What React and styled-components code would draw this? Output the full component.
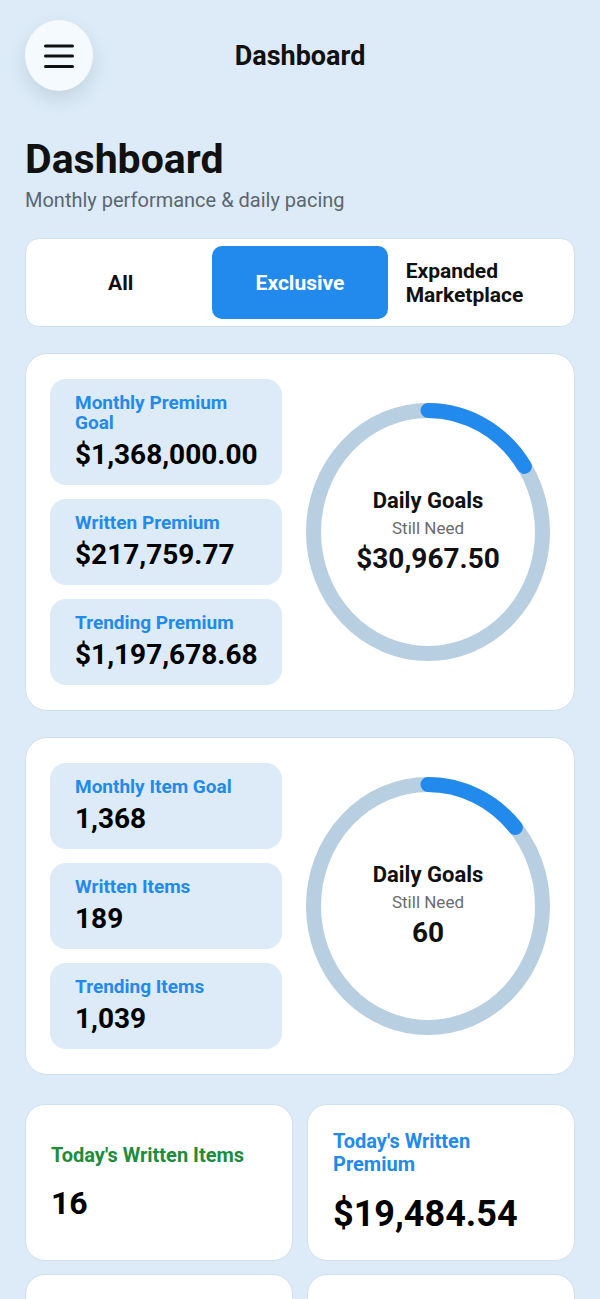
import React from "react";
import styled, { createGlobalStyle } from "styled-components";

const premiumStats = [
  { label: "Monthly Premium Goal", value: "$1,368,000.00" },
  { label: "Written Premium", value: "$217,759.77" },
  { label: "Trending Premium", value: "$1,197,678.68" },
];

const itemStats = [
  { label: "Monthly Item Goal", value: "1,368" },
  { label: "Written Items", value: "189" },
  { label: "Trending Items", value: "1,039" },
];

const tabs = ["All", "Exclusive", "Expanded Marketplace"];

function Ring({ percent, value }) {
  const w = 244;
  const h = 258;
  const rx = (w - 15) / 2;
  const ry = (h - 15) / 2;
  const cx = w / 2;
  const cy = h / 2;
  const a = 2 * Math.PI * percent;
  const ex = cx + rx * Math.sin(a);
  const ey = cy - ry * Math.cos(a);
  const large = percent > 0.5 ? 1 : 0;

  return (
    <RingWrap>
      <svg width={w} height={h} viewBox={`0 0 ${w} ${h}`}>
        <ellipse cx={cx} cy={cy} rx={rx} ry={ry} fill="none" stroke="#b8cee1" strokeWidth="15" />
        <path
          d={`M ${cx} ${cy - ry} A ${rx} ${ry} 0 ${large} 1 ${ex} ${ey}`}
          fill="none"
          stroke="#228aec"
          strokeWidth="15"
          strokeLinecap="round"
        />
      </svg>
      <RingText>
        <RingTitle>Daily Goals</RingTitle>
        <RingSub>Still Need</RingSub>
        <RingValue>{value}</RingValue>
      </RingText>
    </RingWrap>
  );
}

function GoalCard({ stats, percent, need }) {
  return (
    <Card>
      <StatColumn>
        {stats.map((s) => (
          <StatBox key={s.label}>
            <StatLabel>{s.label}</StatLabel>
            <StatValue>{s.value}</StatValue>
          </StatBox>
        ))}
      </StatColumn>
      <Ring percent={percent} value={need} />
    </Card>
  );
}

function App() {
  return (
    <>
      <GlobalStyle />
      <Page>
        <Header>
          <MenuButton>
            <svg width="30" height="24" viewBox="0 0 30 24">
              <g stroke="#111" strokeWidth="3" strokeLinecap="round">
                <line x1="1.5" y1="2" x2="28.5" y2="2" />
                <line x1="1.5" y1="12" x2="28.5" y2="12" />
                <line x1="1.5" y1="22.5" x2="28.5" y2="22.5" />
              </g>
            </svg>
          </MenuButton>
          <HeaderTitle>Dashboard</HeaderTitle>
        </Header>

        <Title>Dashboard</Title>
        <Subtitle>Monthly performance &amp; daily pacing</Subtitle>

        <TabBar>
          {tabs.map((t) => (
            <Tab key={t} $active={t === "Exclusive"}>
              <TabLabel>{t}</TabLabel>
            </Tab>
          ))}
        </TabBar>

        <GoalCard stats={premiumStats} percent={217759.77 / 1368000} need="$30,967.50" />
        <GoalCard stats={itemStats} percent={189 / 1368} need="60" />

        <TodayGrid>
          <TodayCard>
            <TodayLabel $color="#1e8c3d">Today's Written Items</TodayLabel>
            <TodayValue $size={32}>16</TodayValue>
          </TodayCard>
          <TodayCard>
            <TodayLabel $color="#228aec">Today's Written Premium</TodayLabel>
            <TodayValue $size={36}>$19,484.54</TodayValue>
          </TodayCard>
          <TodayCard />
          <TodayCard />
        </TodayGrid>
      </Page>
    </>
  );
}

export default App;

const GlobalStyle = createGlobalStyle`
  * { box-sizing: border-box; }
  body {
    margin: 0;
    background: #dcebf7;
    font-family: Roboto, "Liberation Sans", sans-serif;
    color: #111;
  }
`;

const Page = styled.div`
  min-height: 1299px;
  padding: 20px 25px 40px;
  background: #dcebf7;
`;

const Header = styled.div`
  display: grid;
  grid-template-columns: 68px 1fr 68px;
  align-items: center;
`;

const MenuButton = styled.div`
  width: 68px;
  height: 71px;
  border-radius: 50%;
  background: #f5fafe;
  box-shadow: 0 8px 18px rgba(40, 70, 100, 0.14);
  display: flex;
  align-items: center;
  justify-content: center;
`;

const HeaderTitle = styled.div`
  text-align: center;
  font-size: 27px;
  font-weight: 700;
  line-height: 32px;
`;

const Title = styled.h1`
  margin: 44px 0 0;
  font-size: 41px;
  font-weight: 700;
  line-height: 49px;
`;

const Subtitle = styled.div`
  margin-top: 4px;
  font-size: 20px;
  line-height: 24px;
  color: #5b6670;
`;

const TabBar = styled.div`
  margin-top: 26px;
  display: flex;
  gap: 4px;
  padding: 7px;
  height: 89px;
  background: #fff;
  border: 1px solid #cfe0ef;
  border-radius: 14px;
`;

const Tab = styled.div`
  flex: 1;
  display: flex;
  align-items: center;
  justify-content: center;
  padding: 0 14px;
  border-radius: 10px;
  background: ${(p) => (p.$active ? "#228aec" : "transparent")};
  color: ${(p) => (p.$active ? "#fff" : "#111")};
`;

const TabLabel = styled.span`
  font-size: 21px;
  font-weight: 700;
  line-height: 24px;
  text-align: left;
`;

const Card = styled.div`
  margin-top: 26px;
  display: flex;
  align-items: center;
  justify-content: space-between;
  padding: 25px 24px;
  background: #fff;
  border: 1px solid #cfe0ef;
  border-radius: 22px;
`;

const StatColumn = styled.div`
  width: 232px;
  display: flex;
  flex-direction: column;
  gap: 14px;
`;

const StatBox = styled.div`
  background: #dcebf7;
  border-radius: 16px;
  padding: 14px 25px 13px;
`;

const StatLabel = styled.div`
  font-size: 19px;
  font-weight: 700;
  line-height: 20px;
  color: #228aec;
`;

const StatValue = styled.div`
  margin-top: 5px;
  font-size: 28px;
  font-weight: 700;
  line-height: 34px;
  color: #000;
`;

const RingWrap = styled.div`
  display: grid;
  place-items: center;
  > * {
    grid-area: 1 / 1;
  }
`;

const RingText = styled.div`
  display: flex;
  flex-direction: column;
  align-items: center;
  text-align: center;
`;

const RingTitle = styled.div`
  font-size: 22px;
  font-weight: 700;
  line-height: 26px;
`;

const RingSub = styled.div`
  margin-top: 3px;
  font-size: 17px;
  line-height: 22px;
  color: #6b6b6b;
`;

const RingValue = styled.div`
  margin-top: 3px;
  font-size: 28px;
  font-weight: 700;
  line-height: 34px;
`;

const TodayGrid = styled.div`
  margin-top: 29px;
  display: grid;
  grid-template-columns: 1fr 1fr;
  column-gap: 14px;
  row-gap: 13px;
`;

const TodayCard = styled.div`
  height: 157px;
  display: flex;
  flex-direction: column;
  justify-content: center;
  padding: 0 25px;
  background: #fff;
  border: 1px solid #cfe0ef;
  border-radius: 20px;
`;

const TodayLabel = styled.div`
  font-size: 20px;
  font-weight: 700;
  line-height: 23px;
  color: ${(p) => p.$color};
`;

const TodayValue = styled.div`
  margin-top: 17px;
  font-size: ${(p) => p.$size}px;
  font-weight: 700;
  line-height: ${(p) => p.$size + 6}px;
  color: #000;
`;
